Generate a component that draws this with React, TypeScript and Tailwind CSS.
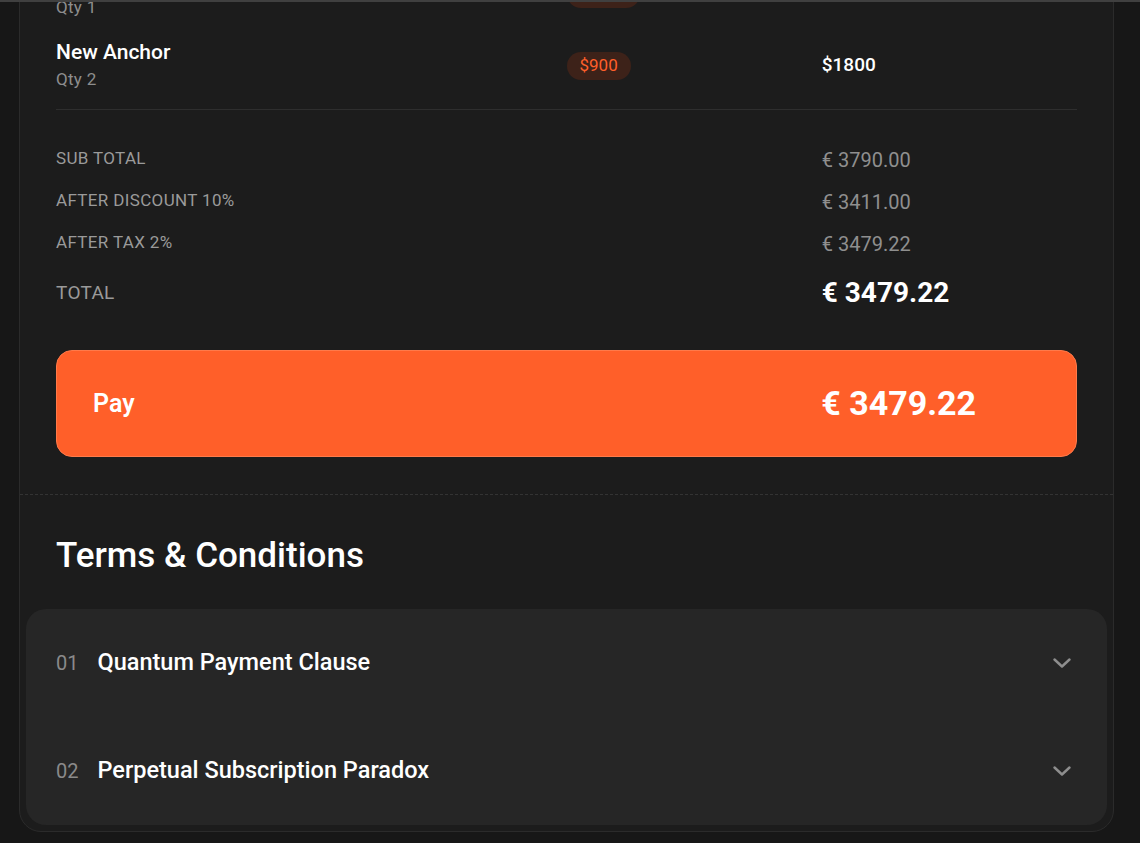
import React from "react";

type Item = { name: string; qty: number; unit: string; total: string };

const items: Item[] = [
    { name: "Flux Capacitor", qty: 1, unit: "$1990", total: "$1990" },
    { name: "New Anchor", qty: 2, unit: "$900", total: "$1800" },
];

const totals = [
    { label: "SUB TOTAL", value: "€ 3790.00" },
    { label: "AFTER DISCOUNT 10%", value: "€ 3411.00" },
    { label: "AFTER TAX 2%", value: "€ 3479.22" },
];

const terms = [
    { no: "01", title: "Quantum Payment Clause" },
    { no: "02", title: "Perpetual Subscription Paradox" },
];

function Chevron() {
    return (
        <svg width="18" height="10" viewBox="0 0 18 10" fill="none" className="text-[#8e8e8e]">
            <path d="M1.5 1.5 9 8.5l7.5-7" stroke="currentColor" strokeWidth="2.4" strokeLinecap="round" strokeLinejoin="round" />
        </svg>
    );
}

export default function App() {
    return (
        <div className="h-[843px] overflow-hidden bg-[#171717] font-['Roboto',sans-serif] border-t-2 border-[#404040]">
            <div className="ml-[19px] w-[1095px] -mt-[37px] rounded-[22px] border border-[#2b2b2b] bg-[#1c1c1c] pb-[6px]">
                <div className="px-9 pb-[37px] border-b border-dashed border-[#333333]">
                    {/* line items */}
                    <div className="flex flex-col gap-[19px]">
                        {items.map((item) => (
                            <div key={item.name} className="grid grid-cols-4 items-center">
                                <div className="col-span-2 flex flex-col">
                                    <span className="text-[21px] leading-[28px] font-medium text-white">{item.name}</span>
                                    <span className="mt-px text-[17px] leading-[24px] tracking-[0.3px] text-[#8d8d8d]">Qty {item.qty}</span>
                                </div>
                                <div className="pt-[2px]">
                                    <span className="inline-flex h-[28px] items-center rounded-full bg-[#3d2219] px-[13px] text-[17px] text-[#ff5f2a]">
                                        {item.unit}
                                    </span>
                                </div>
                                <div className="pt-px text-[19px] font-medium text-white">{item.total}</div>
                            </div>
                        ))}
                    </div>

                    <div className="mt-[18px] border-t border-[#2e2e2e]" />

                    {/* totals */}
                    <div className="mt-9 flex flex-col gap-[14px]">
                        {totals.map((t) => (
                            <div key={t.label} className="grid grid-cols-4 items-start">
                                <div className="col-span-3 text-[17px] leading-[24px] tracking-[0.35px] text-[#9a9a9a]">{t.label}</div>
                                <div className="text-[20px] leading-[28px] text-[#8f8f8f]">{t.value}</div>
                            </div>
                        ))}
                        <div className="mt-[3px] grid h-9 grid-cols-4 items-center">
                            <div className="col-span-3 text-[19px] leading-[28px] tracking-[0.3px] text-[#9a9a9a]">TOTAL</div>
                            <div className="text-[28px] leading-[36px] font-bold text-white">€ 3479.22</div>
                        </div>
                    </div>

                    <button className="mt-[39px] grid h-[107px] w-full grid-cols-4 items-center rounded-[16px] border border-[#ff7a4a] bg-[#ff5f29] text-left text-white">
                        <span className="col-span-3 pl-9 text-[25px] font-semibold">Pay</span>
                        <span className="text-[34px] font-bold">€ 3479.22</span>
                    </button>
                </div>

                <h2 className="px-9 pt-[41px] text-[35px] leading-[40px] font-medium text-white">Terms &amp; Conditions</h2>

                <div className="mx-[6px] mt-[33px] rounded-[20px] bg-[#262626] pl-[30px] pr-9">
                    {terms.map((t) => (
                        <div key={t.no} className="flex h-[108px] items-center justify-between">
                            <div className="flex items-center gap-[19px]">
                                <span className="text-[20px] text-[#8a8a8a]">{t.no}</span>
                                <span className="text-[23.5px] font-medium text-white">{t.title}</span>
                            </div>
                            <Chevron />
                        </div>
                    ))}
                </div>
            </div>
        </div>
    );
}
